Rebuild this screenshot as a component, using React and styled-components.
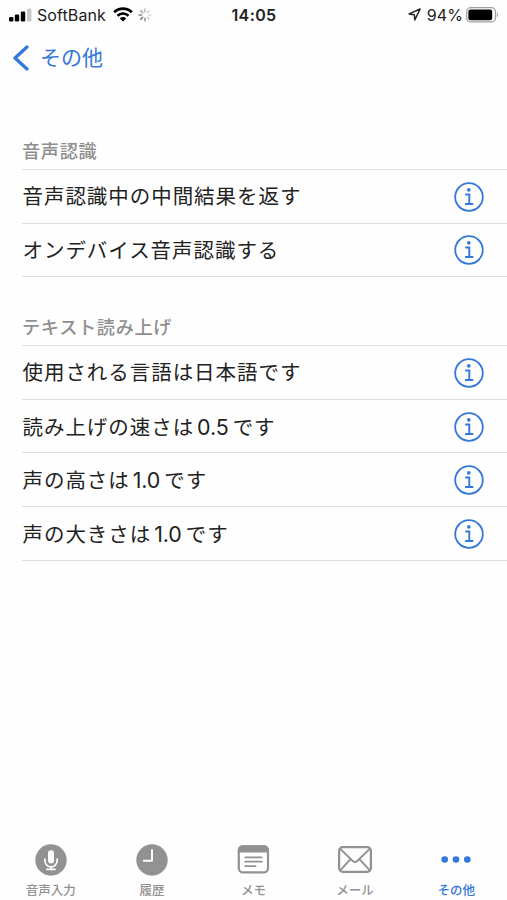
import React from 'react'
import styled, { createGlobalStyle } from 'styled-components';

const sections = [
  {
    title: '音声認識',
    rows: [['音声認識中の中間結果を返す'], ['オンデバイス音声認識する']],
  },
  {
    title: 'テキスト読み上げ',
    rows: [
      ['使用される言語は日本語です'],
      ['読み上げの速さは', '0.5', 'です'],
      ['声の高さは', '1.0', 'です'],
      ['声の大きさは', '1.0', 'です'],
    ],
  },
];

const tabs = [
  { label: '音声入力', Icon: MicIcon },
  { label: '履歴', Icon: ClockIcon },
  { label: 'メモ', Icon: MemoIcon },
  { label: 'メール', Icon: MailIcon },
  { label: 'その他', Icon: MoreIcon, active: true },
];

function App() {
  return (
    <Screen>
      <GlobalStyle />
      <StatusBar>
        <StatusSide>
          <SignalIcon />
          <Carrier>SoftBank</Carrier>
          <WifiIcon />
          <SpinnerIcon />
        </StatusSide>
        <Time>14:05</Time>
        <StatusSide $right>
          <LocationIcon />
          <Percent>94%</Percent>
          <BatteryIcon />
        </StatusSide>
      </StatusBar>

      <NavBar>
        <BackButton>
          <svg width="17" height="28" viewBox="0 0 17 28">
            <path d="M15 3 3 14l12 11" fill="none" stroke="currentColor" strokeWidth="3.3" strokeLinecap="round" strokeLinejoin="round" />
          </svg>
          <span>その他</span>
        </BackButton>
      </NavBar>

      <Content>
        {sections.map((section) => (
          <Section key={section.title}>
            <SectionTitle>{section.title}</SectionTitle>
            <List>
              {section.rows.map((row) => (
                <Row key={row.join('')}>
                  <RowText>
                    {row.map((part, i) => (i === 1 ? <Value key={i}>{part}</Value> : part))}
                  </RowText>
                  <InfoButton aria-label="info"><InfoIcon /></InfoButton>
                </Row>
              ))}
            </List>
          </Section>
        ))}
      </Content>

      <TabBar>
        {tabs.map(({ label, Icon, active }) => (
          <Tab key={label} $active={active}>
            <Icon />
            <TabLabel>{label}</TabLabel>
          </Tab>
        ))}
      </TabBar>
    </Screen>
  );
}

function SignalIcon() {
  return (
    <svg width="23" height="14" viewBox="0 0 23 14">
      <rect x="0" y="9" width="4.4" height="4.5" rx="1.2" />
      <rect x="5.8" y="6.5" width="4.4" height="7" rx="1.2" />
      <rect x="11.8" y="3.5" width="4.4" height="10" rx="1.2" />
      <rect x="18" y="0.5" width="4.4" height="13" rx="1.2" fill="#c9c9c9" />
    </svg>
  );
}

function WifiIcon() {
  return (
    <svg width="20" height="15" viewBox="0 0 20 15">
      <path d="M1.2 5.3a12.6 12.6 0 0 1 17.6 0" fill="none" stroke="#000" strokeWidth="2.8" />
      <path d="M4.5 8.7a7.9 7.9 0 0 1 11 0" fill="none" stroke="#000" strokeWidth="2.6" />
      <path d="M10 14.6 6.8 11.4a4.6 4.6 0 0 1 6.4 0z" />
    </svg>
  );
}

//時計回りに濃さが変わるスピナー
function SpinnerIcon() {
  const shades = ['#aaa', '#ccc', '#ddd', '#ccc', '#888', '#666', '#888', '#999'];
  return (
    <svg width="14" height="14" viewBox="-7 -7 14 14">
      {shades.map((shade, i) => (
        <path key={i} d="M0-3.2V-6" stroke={shade} strokeWidth="1.3" strokeLinecap="round" transform={`rotate(${i * 45})`} />
      ))}
    </svg>
  );
}

function LocationIcon() {
  return (
    <svg width="13" height="13" viewBox="0 0 13 13">
      <path d="M12.1 1 1.1 5.9l5.2.8.5 5.2z" fill="none" stroke="#222" strokeWidth="1.5" strokeLinejoin="round" />
    </svg>
  );
}

function BatteryIcon() {
  return (
    <svg width="33" height="16" viewBox="0 0 33 16">
      <rect x="0.7" y="0.7" width="28.8" height="14.2" rx="4" fill="none" stroke="#a0a0a0" strokeWidth="1.3" />
      <rect x="2.4" y="2.4" width="23.8" height="10.8" rx="2" />
      <path d="M31 5.4c1.6.8 1.6 4 0 4.8z" fill="#a0a0a0" />
    </svg>
  );
}

function InfoIcon() {
  return (
    <svg width="30" height="30" viewBox="0 0 30 30">
      <circle cx="15" cy="15" r="13.8" fill="none" stroke="currentColor" strokeWidth="1.8" />
      <circle cx="14.8" cy="7.9" r="1.8" fill="currentColor" />
      <path d="M12 12.5h3.3v9.2M11.8 22h6.8" fill="none" stroke="currentColor" strokeWidth="1.9" strokeLinecap="round" />
    </svg>
  );
}

function MicIcon() {
  return (
    <svg width="34" height="34" viewBox="0 0 34 34">
      <circle cx="17" cy="17" r="15.7" fill="currentColor" />
      <rect x="14" y="7.2" width="6" height="13.2" rx="3" fill="#fff" />
      <path d="M10.9 16v1.8a6.1 6.1 0 0 0 12.2 0V16M17 24v2.5M12.9 26.3h8.2" fill="none" stroke="#fff" strokeWidth="1.7" strokeLinecap="round" />
    </svg>
  );
}

function ClockIcon() {
  return (
    <svg width="34" height="34" viewBox="0 0 34 34">
      <circle cx="17" cy="17" r="15.7" fill="currentColor" />
      <path d="M17 7v10.8H8.8" fill="none" stroke="#fff" strokeWidth="1.9" strokeLinecap="round" strokeLinejoin="round" />
    </svg>
  );
}

function MemoIcon() {
  return (
    <svg width="34" height="34" viewBox="0 0 34 34">
      <rect x="2.8" y="3.4" width="29.2" height="26" rx="4.2" fill="#fff" stroke="currentColor" strokeWidth="2.2" />
      <path d="M1.9 9.5V7a4.5 4.5 0 0 1 4.5-4.7h22A4.5 4.5 0 0 1 32.9 7v2.5z" fill="currentColor" />
      <path d="M9.2 14.3h16.6M9.2 18.7h16.6M9.2 23.1h10.4" stroke="currentColor" strokeWidth="1.8" strokeLinecap="round" />
    </svg>
  );
}

function MailIcon() {
  return (
    <svg width="36" height="34" viewBox="0 0 36 34">
      <rect x="2.1" y="4.2" width="31.8" height="24.6" rx="3.6" fill="none" stroke="currentColor" strokeWidth="2.2" />
      <path d="M3.2 5.9 15.8 18q2.2 2 4.4 0L32.8 5.9M3.2 27.4 13.6 16.1M32.8 27.4 22.4 16.1" fill="none" stroke="currentColor" strokeWidth="2" />
    </svg>
  );
}

function MoreIcon() {
  return (
    <svg width="34" height="34" viewBox="0 0 34 34">
      <circle cx="5.7" cy="16.5" r="3.3" fill="currentColor" />
      <circle cx="17" cy="16.5" r="3.3" fill="currentColor" />
      <circle cx="28.3" cy="16.5" r="3.3" fill="currentColor" />
    </svg>
  );
}

const GlobalStyle = createGlobalStyle`
  body {
    margin: 0;
    background: #fefefe;
  }

  * {
    box-sizing: border-box;
  }

  svg {
    display: block;
    flex-shrink: 0;
  }
`;

const Screen = styled.div`
  display: flex;
  flex-direction: column;
  height: 900px;
  overflow: hidden;
  color: #222;
  font-family: Inter, "Noto Sans CJK JP", sans-serif;
`;

const StatusBar = styled.header`
  display: grid;
  grid-template-columns: 1fr auto 1fr;
  align-items: center;
  height: 29px;
  padding: 0 8px 0 9px;
`;

const StatusSide = styled.div`
  display: flex;
  align-items: center;
  justify-content: ${(props) => (props.$right ? 'flex-end' : 'flex-start')};
`;

const Carrier = styled.span`
  margin: 0 7px 0 5px;
  font-size: 16px;
  letter-spacing: 0.1px;

  & + svg {
    margin-right: 5px;
  }
`;

const Time = styled.span`
  font-size: 16px;
  font-weight: 600;
  letter-spacing: 0.4px;
`;

const Percent = styled.span`
  margin: 0 3px 0 6px;
  font-size: 16px;
  letter-spacing: 0.1px;
`;

const NavBar = styled.nav`
  display: flex;
  align-items: center;
  height: 57px;
  padding-left: 12px;
`;

const BackButton = styled.button`
  display: flex;
  align-items: center;
  gap: 11px;
  padding: 0;
  border: none;
  background: none;
  color: #3478d8;
  font-family: inherit;
  font-size: 21px;
  line-height: 28px;
`;

const Content = styled.main`
  flex: 1;
  padding: 47px 0 0 22px;
`;

const Section = styled.section`
  & + & {
    margin-top: 32px;
  }
`;

const SectionTitle = styled.h2`
  height: 36px;
  margin: 0;
  color: #8f8f8f;
  font-size: 18.2px;
  font-weight: 500;
  letter-spacing: 0.65px;
  line-height: 36px;
`;

const List = styled.ul`
  margin: 0;
  padding: 0;
  border-top: 1px solid #dedede;
  list-style: none;
`;

const Row = styled.li`
  display: flex;
  align-items: center;
  justify-content: space-between;
  height: 53.6px;
  padding: 1px 23px 0 0;
  border-bottom: 1px solid #dedede;
`;

const RowText = styled.span`
  padding: 1px 0 0 0.5px;
  font-size: 20.5px;
  letter-spacing: 0.95px;
  line-height: 30px;
`;

const Value = styled.span`
  margin: 0 4px 0 3px;
  font-size: 21.4px;
  letter-spacing: -0.1px;
`;

const InfoButton = styled.button`
  padding: 0;
  border: none;
  background: none;
  color: #3478d8;
`;

const TabBar = styled.footer`
  display: grid;
  grid-template-columns: repeat(5, 1fr);
  height: 64px;
  padding-top: 7px;
`;

const Tab = styled.div`
  display: flex;
  flex-direction: column;
  align-items: center;
  color: ${(props) => (props.$active ? '#3478d8' : '#929292')};
`;

const TabLabel = styled.span`
  margin-top: 5px;
  font-size: 12.5px;
  font-weight: 500;
  line-height: 18px;
`;

export default App
